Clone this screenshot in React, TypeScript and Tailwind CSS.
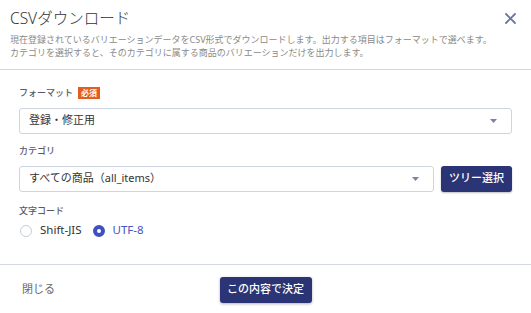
import React from "react";

function Caret() {
  return (
    <svg width="7" height="4" viewBox="0 0 7 4" className="shrink-0">
      <path d="M0 0 L7 0 L3.5 4 Z" fill="#7c81a5" />
    </svg>
  );
}

export default function App() {
  return (
    <div className="w-[531px] h-[313px] bg-white font-['Noto_Sans','Noto_Sans_CJK_JP',sans-serif] text-[#333] flex flex-col overflow-hidden">
      {/* Header */}
      <div className="pl-[10px] pr-[14px] pt-[7px] pb-[10px] border-b border-[#d3d7e1]">
        <div className="flex items-center justify-between h-[22px]">
          <div className="text-[15.5px] leading-[22px] font-light text-[#333]">CSVダウンロード</div>
          <svg width="11" height="11" viewBox="0 0 11 11" className="mr-[1px]">
            <path d="M1 1 L10 10 M10 1 L1 10" stroke="#6d74a6" strokeWidth="1.8" strokeLinecap="round" />
          </svg>
        </div>
        <div className="mt-[3.5px] text-[9px] leading-[13px] text-[#8a8a8a]">
          <div>現在登録されているバリエーションデータをCSV形式でダウンロードします。出力する項目はフォーマットで選べます。</div>
          <div>カテゴリを選択すると、そのカテゴリに属する商品のバリエーションだけを出力します。</div>
        </div>
      </div>

      {/* Body */}
      <div className="px-[19px] pt-[17px] pb-[27px] border-b border-[#d3d7e1] flex flex-col">
        <div className="flex items-center h-[12px] gap-[5px]">
          <span className="text-[9px] leading-[12px] font-medium text-[#5a5a66]">フォーマット</span>
          <span className="bg-[#e35d1f] text-white text-[8px] leading-[12px] px-[3px] font-bold">必須</span>
        </div>
        <div className="mt-[9px] h-[26px] border border-[#cfd4e2] rounded-[3px] flex items-center justify-between pl-[9px] pr-[14px]">
          <span className="text-[11px]">登録・修正用</span>
          <Caret />
        </div>

        <div className="mt-[11px] h-[12px] flex items-center">
          <span className="text-[9px] leading-[12px] font-medium text-[#5a5a66]">カテゴリ</span>
        </div>
        <div className="mt-[9px] flex gap-[7px] h-[26px]">
          <div className="flex-1 border border-[#cfd4e2] rounded-[3px] flex items-center justify-between pl-[9px] pr-[14px]">
            <span className="text-[11px]">すべての商品（all_items）</span>
            <Caret />
          </div>
          <button className="w-[71px] bg-[#2b3474] text-white text-[11px] font-medium rounded-[3px] shadow-[0_1px_2px_rgba(0,0,0,0.25)]">
            ツリー選択
          </button>
        </div>

        <div className="mt-[13px] h-[12px] flex items-center">
          <span className="text-[9px] leading-[12px] font-medium text-[#5a5a66]">文字コード</span>
        </div>
        <div className="mt-[6px] h-[14px] flex items-center">
          <span className="w-[12px] h-[12px] rounded-full border border-[#c8cdd9] ml-[1px] mt-[2px]" />
          <span className="ml-[8px] text-[11.5px] text-[#333]">Shift-JIS</span>
          <span className="ml-[11px] w-[12px] h-[12px] rounded-full border-[4px] border-[#3f50c2] bg-white mt-[2px]" />
          <span className="ml-[8px] text-[11.5px] text-[#4653c0]">UTF-8</span>
        </div>
      </div>

      {/* Footer */}
      <div className="px-[22px] pt-[12px] grid grid-cols-[1fr_auto_1fr] items-center">
        <span className="text-[11px] text-[#666]">閉じる</span>
        <button className="w-[92px] h-[26px] bg-[#2b3474] text-white text-[11px] font-medium rounded-[3px] shadow-[0_1px_3px_rgba(0,0,0,0.3)]">
          この内容で決定
        </button>
        <span />
      </div>
    </div>
  );
}
